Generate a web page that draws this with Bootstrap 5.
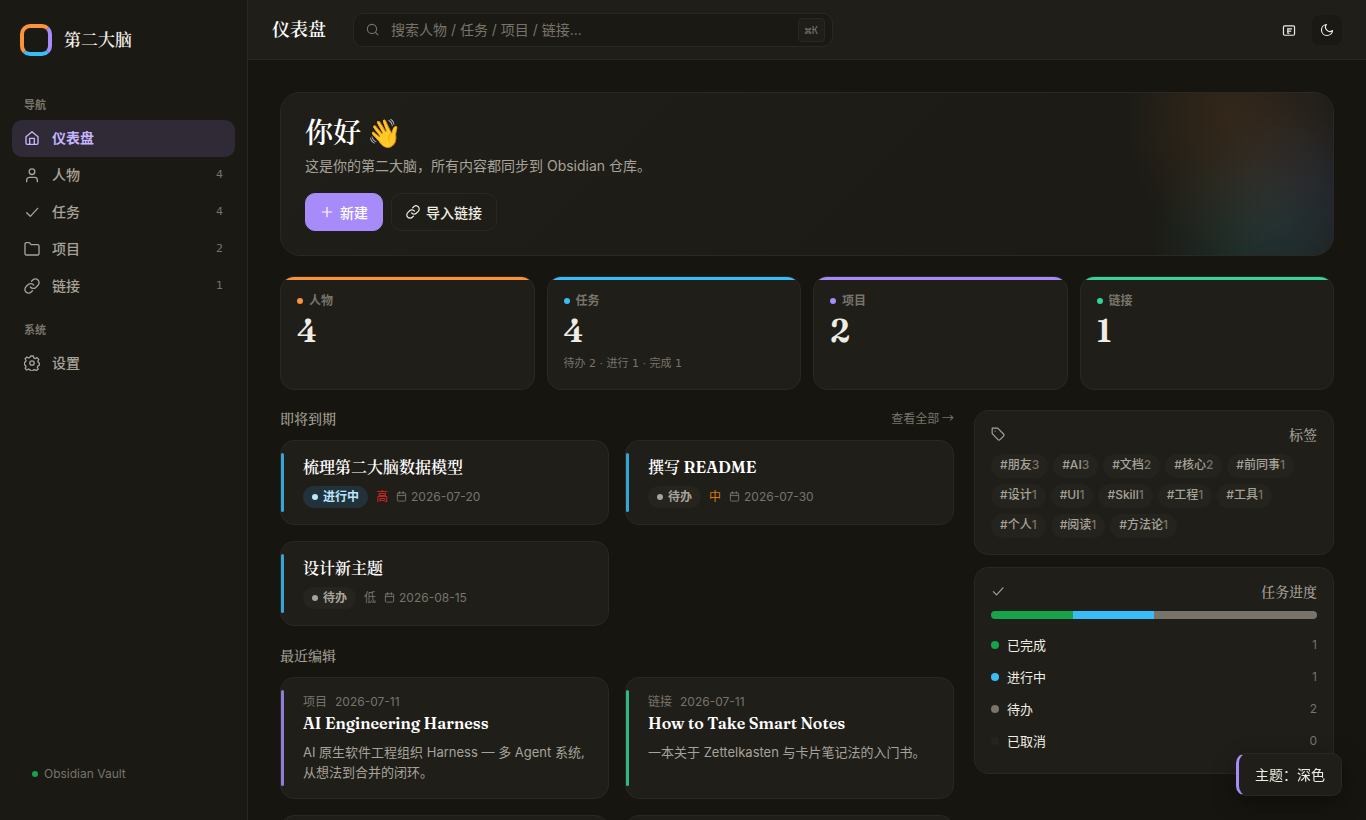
<!DOCTYPE html>
<html lang="zh-CN" data-bs-theme="dark">
<head>
<meta charset="utf-8">
<meta name="viewport" content="width=device-width, initial-scale=1">
<title>第二大脑</title>
<link href="https://cdn.jsdelivr.net/npm/bootstrap@5.3.0/dist/css/bootstrap.min.css" rel="stylesheet">
<style>
:root{--page:#16150f;--sunken:#1a1914;--surface:#1f1e19;--raised:#25241f;--line:#2a2822;--ink:#f0ede4;--soft:#a8a399;--faint:#78746b;
--orange:#fb923c;--blue:#38bdf8;--violet:#a78bfa;--green:#34d399;
--serif:Fraunces,"Noto Serif CJK SC","Noto Serif SC","Liberation Serif",serif}
body{background:var(--page);color:var(--ink);font-family:Inter,"Noto Sans CJK SC",sans-serif;font-size:14px;line-height:20px}
a{color:inherit;text-decoration:none}
h1,h2,h3,p{margin:0}
svg{fill:none;stroke:currentColor;stroke-width:2;stroke-linecap:round;stroke-linejoin:round;flex:none}
.serif{font-family:var(--serif);font-weight:600}
.cjk{font-family:"Noto Sans CJK SC",sans-serif}
.soft{color:var(--soft)}.faint{color:var(--faint)}
.fs-12{font-size:12px}.fs-13{font-size:13px}
.side{width:248px;background:var(--sunken);border-right:1px solid var(--line);padding:24px 12px 36px}
.logo-mark{width:32px;height:32px;border:4px solid;border-color:var(--orange) var(--violet) var(--blue) var(--orange);border-radius:10px}
.logo-name{font-size:17px;font-weight:600}
.menu{margin-top:41px}
.group-name{font-size:11px;font-weight:600;line-height:16px;color:var(--faint);padding:0 12px;margin-bottom:7px}
.nav-link + .group-name{margin-top:17px}
.side .nav-link{display:flex;align-items:center;gap:12px;height:37px;padding:0 12px 1px;border-radius:10px;font-size:14px;color:var(--soft);font-weight:500}
.side .nav-link.active{background:#302a36;color:#c4b5fd;font-weight:600}
.count{font:11px/18px "DejaVu Sans","Noto Sans CJK SC",sans-serif;color:var(--faint)}
.status{gap:6px;padding-left:20px}
.top{height:60px;background:var(--surface);border-bottom:1px solid var(--line);padding:0 24px;gap:27px;flex:none}
.top h1{font-size:18px;font-weight:600;line-height:24px}
.search{width:480px;height:34px;background:var(--sunken);border:1px solid var(--line);border-radius:10px;padding:0 7px 0 12px}
.search input{background:none;border:0;outline:0;color:var(--ink);min-width:0;padding:0}
.search input::placeholder{color:var(--faint);opacity:1}
.search kbd{background:var(--surface);border:1px solid var(--line);border-radius:4px;color:var(--faint);font:11px/18px "JetBrains Mono","Liberation Mono",monospace;padding:2px 6px}
.tool{width:30px;height:30px;border:0;border-radius:8px;background:none;color:var(--ink);padding:0;display:grid;place-items:center}
.tool.on{background:var(--sunken)}
.page{padding:32px;overflow:auto;scrollbar-width:none;min-height:0}
.page::-webkit-scrollbar{display:none}
.panel{background:var(--surface);border:1px solid var(--line);border-radius:14px}
.hero{border-radius:20px;padding:20px 24px 24px;background:
radial-gradient(closest-side,#fb923c1a,#fb923c12 40%,transparent) right -10px top -110px/220px 270px no-repeat,
radial-gradient(closest-side,#38bdf814,#38bdf80c 45%,transparent) right -80px top 20px/260px 230px no-repeat,
radial-gradient(closest-side,#34d39910,#34d39908 45%,transparent) right -10px top 60px/200px 200px no-repeat,
radial-gradient(closest-side,#a78bfa10,transparent) right -80px top -20px/200px 220px no-repeat,
linear-gradient(135deg,#1f1e19,#1b1a15)}
.hero h2{font-size:28px;line-height:40px;font-weight:600}
.hero p{font-size:14px;line-height:22px;margin-top:2px}
.hero .btn{display:flex;align-items:center;gap:6px;height:38px;border-radius:10px;font-size:14px;font-weight:500;padding:0 14px;border:1px solid var(--line);color:var(--ink)}
.hero .btn-new{background:var(--violet);border-color:var(--violet);color:#fff}
.stats{display:grid;grid-template-columns:repeat(4,1fr);gap:12px}
.stat{position:relative;overflow:hidden;height:114px;padding:16px}
.stat::before{content:"";position:absolute;inset:0 0 auto;height:3px;background:var(--tone)}
.dot{width:6px;height:6px;border-radius:50%;background:var(--tone,currentColor);flex:none}
.dot-lg{width:8px;height:8px}
.stat-name{gap:6px;font-size:12px;font-weight:600;line-height:16px;color:var(--faint)}
.stat-num{font-size:32px;line-height:40px;margin-top:2px}
.stat-note{margin-top:4px}
.t-orange{--tone:var(--orange)}.t-blue{--tone:var(--blue)}.t-violet{--tone:var(--violet)}.t-green{--tone:var(--green)}
.t-done{--tone:#16a34a}.t-todo{--tone:#78746b}.t-off{--tone:#25241f}
.split{display:grid;grid-template-columns:minmax(0,1fr) 360px;gap:20px;align-items:start}
.sect{font-size:14px;font-weight:500;line-height:18px;color:var(--soft)}
.pair{display:grid;grid-template-columns:1fr 1fr;gap:16px}
.pair-due{margin-bottom:21px}
.item{position:relative;padding:16px 22px}
.item::before{content:"";position:absolute;left:0;top:12px;bottom:12px;width:3px;border-radius:2px;background:var(--tone);opacity:.85}
.item h3{font-size:16px;line-height:21px}
.kind{font-size:12px;line-height:16px;color:var(--faint);margin-bottom:3px}
.state{display:inline-flex;align-items:center;gap:5px;height:22px;border-radius:11px;padding:0 9px;font-size:12px;font-weight:600;background:var(--raised);color:var(--soft)}
.state.doing{background:#21323a;color:#bae6fd}
.state .dot{background:currentColor}
.prio-high{color:#dc2626}.prio-mid{color:#d97706}
.side-head{height:19px;margin-bottom:8px}
.side-head .sect{line-height:16px}
.chips{gap:6px 5px}
.chip{height:24px;border-radius:12px;padding:0 9px;line-height:22px;font-size:12px;font-weight:500;background:#24231e;color:var(--soft)}
.chip span{color:var(--faint)}
.meter{height:8px;border-radius:4px;overflow:hidden;margin-bottom:10px}
.meter div{background:var(--tone)}
.tally{padding:6px 0;font-size:13px}
.toast-note{position:fixed;right:24px;bottom:24px;background:var(--surface);border:1px solid var(--line);border-left:3px solid var(--violet);border-radius:10px;padding:11px 16px 10px;box-shadow:0 8px 24px #0005}
</style>
</head>
<body>
<svg width="0" height="0" class="position-absolute" aria-hidden="true"><defs>
<symbol id="i-home" viewBox="0 0 24 24"><path d="M3 10 12 2.500l9 7.500V19.500a2 2 0 0 1-2 2H5a2 2 0 0 1-2-2zM8.500 21.500V12.500h7v9"/></symbol>
<symbol id="i-user" viewBox="0 0 24 24"><circle cx="12" cy="7" r="4.200"/><path d="M4 22v-2.500a4 4 0 0 1 4-4h8a4 4 0 0 1 4 4V22"/></symbol>
<symbol id="i-check" viewBox="0 0 24 24"><path d="M4 13l5.500 5.500L20.500 6.500"/></symbol>
<symbol id="i-folder" viewBox="0 0 24 24"><path d="M1.500 19V4.500a2 2 0 0 1 2-2H8L10.500 5.500H20.500a2 2 0 0 1 2 2V19a2 2 0 0 1-2 2h-17a2 2 0 0 1-2-2z"/></symbol>
<symbol id="i-link" viewBox="0 0 24 24"><path d="M9.500 13.500a5.500 5.500 0 0 0 8.200.6l3.300-3.300a5.500 5.500 0 0 0-7.800-7.800l-1.900 1.900M14.500 10.500a5.500 5.500 0 0 0-8.200-.6L3 13.200A5.500 5.500 0 0 0 10.800 21l1.900-1.900"/></symbol>
<symbol id="i-gear" viewBox="0 0 24 24"><circle cx="12" cy="12" r="3.300"/><path d="M10 1.500h4l.8 3 2.200.9 2.700-1.500 2.400 2.700-1.300 2.800.8 2 1.400.6v3.400l-2 .9-1 2.100 1.300 2.700-2.800 2.200-2.600-1.400-2.100.9-.8 1.200h-3l-1.200-2-2.200-.8-2.600 1.300-2.300-2.400 1.300-2.800-.8-2-1.700-.6v-3.400l1.700-1 .9-2.100-1.400-2.600 2.500-2.500 2.600 1.300 2-.9z"/></symbol>
<symbol id="i-search" viewBox="0 0 24 24"><circle cx="11" cy="11" r="8.500"/><path d="m17.500 17.500 4.500 4.500"/></symbol>
<symbol id="i-plus" viewBox="0 0 24 24"><path d="M12 4v16M4 12h16"/></symbol>
<symbol id="i-cal" viewBox="0 0 24 24"><rect x="3" y="4" width="18" height="18" rx="2"/><path d="M3 10h18M8 1.500v5M16 1.500v5"/></symbol>
<symbol id="i-tag" viewBox="0 0 24 24"><path d="M2 2h9.500l10 10a2.500 2.500 0 0 1 0 3.500l-6 6a2.500 2.500 0 0 1-3.500 0L2 11.500zM7 7h.1"/></symbol>
<symbol id="i-moon" viewBox="0 0 24 24"><path d="M21.500 13A9.500 9.500 0 1 1 11 2.500a7.500 7.500 0 0 0 10.500 10.500z"/></symbol>
<symbol id="i-lang" viewBox="0 0 24 24"><rect x="2.500" y="5" width="19" height="16" rx="2"/><path d="M9.500 10h7M9.500 14h5.500M10 10v7.500h2"/></symbol>
</defs></svg>
<div class="d-flex vh-100 overflow-hidden">
<aside class="side d-flex flex-column flex-shrink-0">
  <a href="#" class="d-flex align-items-center gap-2 px-2"><span class="logo-mark me-1"></span><span class="serif logo-name">第二大脑</span></a>
  <nav class="menu nav flex-column flex-nowrap">
    <div class="group-name">导航</div>
    <a class="nav-link active" href="#"><svg width="16" height="16"><use href="#i-home"/></svg>仪表盘</a>
    <a class="nav-link" href="#"><svg width="16" height="16"><use href="#i-user"/></svg>人物<span class="count ms-auto">4</span></a>
    <a class="nav-link" href="#"><svg width="16" height="16"><use href="#i-check"/></svg>任务<span class="count ms-auto">4</span></a>
    <a class="nav-link" href="#"><svg width="16" height="16"><use href="#i-folder"/></svg>项目<span class="count ms-auto">2</span></a>
    <a class="nav-link" href="#"><svg width="16" height="16"><use href="#i-link"/></svg>链接<span class="count ms-auto">1</span></a>
    <div class="group-name">系统</div>
    <a class="nav-link" href="#"><svg width="16" height="16"><use href="#i-gear"/></svg>设置</a>
  </nav>
  <div class="status mt-auto d-flex align-items-center faint"><span class="dot t-done"></span><span class="fs-12">Obsidian Vault</span></div>
</aside>
<div class="d-flex flex-column flex-grow-1 overflow-hidden">
  <header class="top d-flex align-items-center">
    <h1 class="serif">仪表盘</h1>
    <label class="search d-flex align-items-center faint"><svg width="13" height="13"><use href="#i-search"/></svg><input class="flex-grow-1 mx-2 ps-1" type="search" aria-label="搜索" placeholder="搜索人物 / 任务 / 项目 / 链接..."><kbd>⌘K</kbd></label>
    <div class="ms-auto d-flex gap-2"><button class="tool" aria-label="语言"><svg width="14" height="14"><use href="#i-lang"/></svg></button><button class="tool on" aria-label="主题"><svg width="14" height="14"><use href="#i-moon"/></svg></button></div>
  </header>
  <main class="page">
    <section class="panel hero">
      <h2 class="serif">你好 👋</h2>
      <p class="soft">这是你的第二大脑，所有内容都同步到 Obsidian 仓库。</p>
      <div class="d-flex gap-2 mt-3"><button class="btn btn-new"><svg width="14" height="14"><use href="#i-plus"/></svg>新建</button><button class="btn"><svg width="14" height="14"><use href="#i-link"/></svg>导入链接</button></div>
    </section>
    <section class="stats my-3 py-1">
      <div class="panel stat t-orange"><div class="stat-name d-flex align-items-center"><span class="dot"></span>人物</div><div class="stat-num serif">4</div></div>
      <div class="panel stat t-blue"><div class="stat-name d-flex align-items-center"><span class="dot"></span>任务</div><div class="stat-num serif">4</div><div class="stat-note count">待办 2 · 进行 1 · 完成 1</div></div>
      <div class="panel stat t-violet"><div class="stat-name d-flex align-items-center"><span class="dot"></span>项目</div><div class="stat-num serif">2</div></div>
      <div class="panel stat t-green"><div class="stat-name d-flex align-items-center"><span class="dot"></span>链接</div><div class="stat-num serif">1</div></div>
    </section>
    <div class="split">
      <div>
        <div class="d-flex justify-content-between mb-2 pb-1"><h2 class="serif sect">即将到期</h2><a href="#" class="cjk fs-12 faint lh-sm">查看全部 →</a></div>
        <div class="pair pair-due">
          <article class="panel item t-blue"><h3 class="serif">梳理第二大脑数据模型</h3><div class="d-flex align-items-center gap-2 mt-2 fs-12 faint"><span class="state doing"><span class="dot"></span>进行中</span><span class="prio-high">高</span><span class="d-flex gap-1"><svg class="mt-1" width="11" height="11"><use href="#i-cal"/></svg><span>2026-07-20</span></span></div></article>
          <article class="panel item t-blue"><h3 class="serif">撰写 README</h3><div class="d-flex align-items-center gap-2 mt-2 fs-12 faint"><span class="state"><span class="dot"></span>待办</span><span class="prio-mid">中</span><span class="d-flex gap-1"><svg class="mt-1" width="11" height="11"><use href="#i-cal"/></svg><span>2026-07-30</span></span></div></article>
          <article class="panel item t-blue"><h3 class="serif">设计新主题</h3><div class="d-flex align-items-center gap-2 mt-2 fs-12 faint"><span class="state"><span class="dot"></span>待办</span><span>低</span><span class="d-flex gap-1"><svg class="mt-1" width="11" height="11"><use href="#i-cal"/></svg><span>2026-08-15</span></span></div></article>
        </div>
        <h2 class="serif sect mb-2 pb-1">最近编辑</h2>
        <div class="pair">
          <article class="panel item t-violet"><div class="kind"><span class="me-2">项目</span>2026-07-11</div><h3 class="serif">AI Engineering Harness</h3><p class="fs-13 soft mt-2">AI 原生软件工程组织 Harness — 多 Agent 系统, 从想法到合并的闭环。</p></article>
          <article class="panel item t-green"><div class="kind"><span class="me-2">链接</span>2026-07-11</div><h3 class="serif">How to Take Smart Notes</h3><p class="fs-13 soft mt-2">一本关于 Zettelkasten 与卡片笔记法的入门书。</p></article>
          <article class="panel item t-orange"></article>
          <article class="panel item t-orange"></article>
        </div>
      </div>
      <div class="d-flex flex-column" style="gap:12px">
        <section class="panel p-3">
          <div class="side-head d-flex justify-content-between soft"><svg width="14" height="14"><use href="#i-tag"/></svg><h2 class="serif sect">标签</h2></div>
          <div class="chips d-flex flex-wrap">
            <a href="#" class="chip">#朋友<span>3</span></a><a href="#" class="chip">#AI<span>3</span></a><a href="#" class="chip">#文档<span>2</span></a><a href="#" class="chip">#核心<span>2</span></a><a href="#" class="chip">#前同事<span>1</span></a><a href="#" class="chip">#设计<span>1</span></a><a href="#" class="chip">#UI<span>1</span></a><a href="#" class="chip">#Skill<span>1</span></a><a href="#" class="chip">#工程<span>1</span></a><a href="#" class="chip">#工具<span>1</span></a><a href="#" class="chip">#个人<span>1</span></a><a href="#" class="chip">#阅读<span>1</span></a><a href="#" class="chip">#方法论<span>1</span></a>
          </div>
        </section>
        <section class="panel p-3">
          <div class="side-head d-flex justify-content-between soft"><svg width="14" height="14"><use href="#i-check"/></svg><h2 class="serif sect">任务进度</h2></div>
          <div class="meter d-flex"><div class="t-done" style="width:25%"></div><div class="t-blue" style="width:25%"></div><div class="t-todo" style="width:50%"></div></div>
          <div class="tally d-flex align-items-center"><span class="dot dot-lg t-done me-2"></span>已完成<span class="ms-auto fs-12 faint">1</span></div>
          <div class="tally d-flex align-items-center"><span class="dot dot-lg t-blue me-2"></span>进行中<span class="ms-auto fs-12 faint">1</span></div>
          <div class="tally d-flex align-items-center"><span class="dot dot-lg t-todo me-2"></span>待办<span class="ms-auto fs-12 faint">2</span></div>
          <div class="tally d-flex align-items-center"><span class="dot dot-lg t-off me-2"></span>已取消<span class="ms-auto fs-12 faint">0</span></div>
        </section>
      </div>
    </div>
  </main>
</div>
</div>
<div class="toast-note" role="status">主题：深色</div>
<script src="https://cdn.jsdelivr.net/npm/bootstrap@5.3.0/dist/js/bootstrap.bundle.min.js"></script>
</body>
</html>
